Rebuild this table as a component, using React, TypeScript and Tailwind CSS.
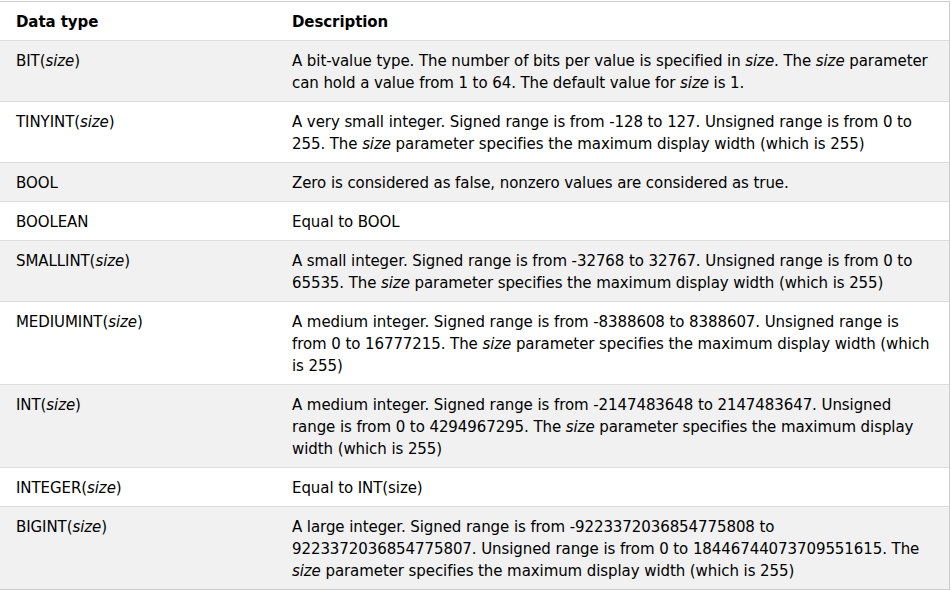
import React from "react";

type Row = { type: React.ReactNode; desc: React.ReactNode[] };

const S = () => <i>size</i>;

const rows: Row[] = [
  {
    type: <>BIT(<S />)</>,
    desc: [
      <>A bit-value type. The number of bits per value is specified in <S />. The <S /> parameter</>,
      <>can hold a value from 1 to 64. The default value for <S /> is 1.</>,
    ],
  },
  {
    type: <>TINYINT(<S />)</>,
    desc: [
      <>A very small integer. Signed range is from -128 to 127. Unsigned range is from 0 to</>,
      <>255. The <S /> parameter specifies the maximum display width (which is 255)</>,
    ],
  },
  {
    type: <>BOOL</>,
    desc: [<>Zero is considered as false, nonzero values are considered as true.</>],
  },
  {
    type: <>BOOLEAN</>,
    desc: [<>Equal to BOOL</>],
  },
  {
    type: <>SMALLINT(<S />)</>,
    desc: [
      <>A small integer. Signed range is from -32768 to 32767. Unsigned range is from 0 to</>,
      <>65535. The <S /> parameter specifies the maximum display width (which is 255)</>,
    ],
  },
  {
    type: <>MEDIUMINT(<S />)</>,
    desc: [
      <>A medium integer. Signed range is from -8388608 to 8388607. Unsigned range is</>,
      <>from 0 to 16777215. The <S /> parameter specifies the maximum display width (which</>,
      <>is 255)</>,
    ],
  },
  {
    type: <>INT(<S />)</>,
    desc: [
      <>A medium integer. Signed range is from -2147483648 to 2147483647. Unsigned</>,
      <>range is from 0 to 4294967295. The <S /> parameter specifies the maximum display</>,
      <>width (which is 255)</>,
    ],
  },
  {
    type: <>INTEGER(<S />)</>,
    desc: [<>Equal to INT(size)</>],
  },
  {
    type: <>BIGINT(<S />)</>,
    desc: [
      <>A large integer. Signed range is from -9223372036854775808 to</>,
      <>9223372036854775807. Unsigned range is from 0 to 18446744073709551615. The</>,
      <><S /> parameter specifies the maximum display width (which is 255)</>,
    ],
  },
];

export default function App() {
  return (
    <div
      className="w-[951px] h-[590px] bg-white pt-px overflow-hidden text-black"
      style={{ fontFamily: '"DejaVu Sans", Verdana, sans-serif' }}
    >
      <div className="w-[950px] border-t border-r border-b border-[#cccccc] text-[15px] leading-[22px] tracking-[-0.08px]">
        <div className="flex bg-white font-bold">
          <div className="w-[284px] shrink-0 pl-4 pr-2 pt-[9px] pb-[7px]">Data type</div>
          <div className="flex-1 px-2 pt-[9px] pb-[7px]">Description</div>
        </div>
        {rows.map((r, i) => (
          <div
            key={i}
            className={`flex border-t border-[#dddddd] ${i % 2 === 0 ? "bg-[#f1f1f1]" : "bg-white"}`}
          >
            <div className="w-[284px] shrink-0 pl-4 pr-2 pt-[9px] pb-[7px] whitespace-nowrap">{r.type}</div>
            <div className="flex-1 px-2 pt-[9px] pb-[7px]">
              {r.desc.map((d, j) => (
                <div key={j} className="whitespace-nowrap">
                  {d}
                </div>
              ))}
            </div>
          </div>
        ))}
      </div>
    </div>
  );
}
